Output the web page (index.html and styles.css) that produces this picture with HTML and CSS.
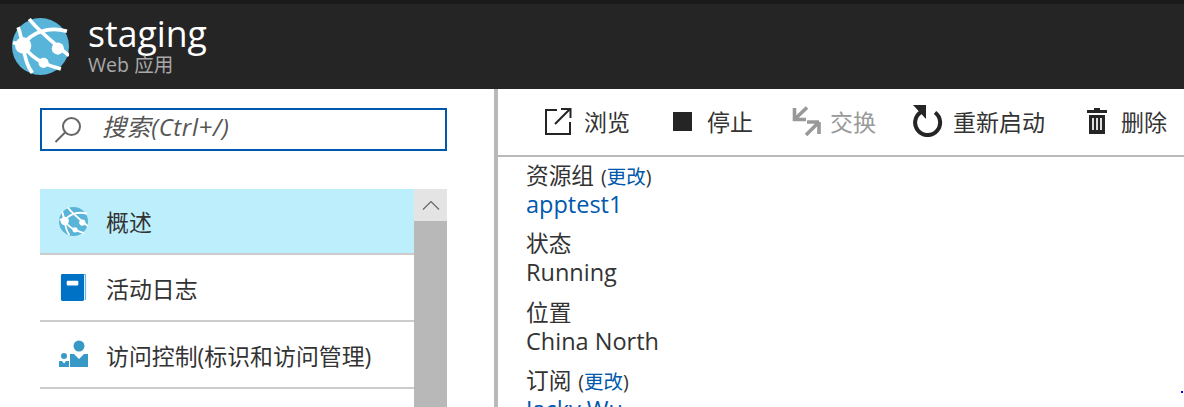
FILE: index.html
```html
<!DOCTYPE html>
<html lang="zh">
<head>
<meta charset="utf-8">
<title>staging</title>
<link rel="stylesheet" href="styles.css">
</head>
<body>
<svg class="defs" width="0" height="0">
  <symbol id="globe" viewBox="0 0 56 56">
    <circle cx="28" cy="28" r="28" fill="#59b4d9"/>
    <path d="M17 1C25 12 38 22 56 37M11 27C18 14 36 8 54 13M6 9C9 16 9 22 11 27C12 36 14 46 20 54M1 24 11 27M11 27C17 36 24 41 31 44C36 47 42 48 48 50" fill="none" stroke="#fff" stroke-width="3.600"/>
    <circle cx="11" cy="27" r="8" fill="#fff"/>
    <circle cx="45" cy="30" r="6" fill="#fff"/>
    <circle cx="31" cy="44" r="5" fill="#fff"/>
  </symbol>
</svg>
<header class="header">
  <svg class="logo" viewBox="0 0 56 56"><use href="#globe"/></svg>
  <div class="titles">
    <div class="title">staging</div>
    <div class="subtitle">Web 应用</div>
  </div>
</header>
<main class="main">
  <aside class="sidebar">
    <div class="search">
      <svg class="search-icon" viewBox="0 0 28 28"><circle cx="17.500" cy="10.500" r="8.500" fill="none" stroke="#666" stroke-width="2"/><path d="M11 16.500 1.500 26" stroke="#666" stroke-width="2" fill="none"/></svg>
      <span class="search-text">搜索(Ctrl+/)</span>
    </div>
    <div class="menu">
      <ul class="menu-list">
        <li class="menu-item active">
          <svg class="menu-icon" viewBox="0 0 56 56"><use href="#globe"/></svg>
          <span>概述</span>
        </li>
        <li class="menu-item">
          <svg class="menu-icon" viewBox="0 0 28 30"><path d="M3 1h23a1 1 0 0 1 1 1v26h-1V2H3z" fill="#59b4d9"/><rect x="1" y="1" width="24" height="28" rx="1.500" fill="#0072c6"/><rect x="7" y="8" width="12" height="5" rx="1" fill="#fff"/></svg>
          <span>活动日志</span>
        </li>
        <li class="menu-item">
          <svg class="menu-icon" viewBox="0 0 29 29"><circle cx="20" cy="6" r="5.500" fill="#3999c6"/><path d="M11 14h4l5 5 5-5h4v13H11z" fill="#3999c6"/><circle cx="5" cy="16" r="3" fill="#3999c6"/><path d="M0 21h3l2 2.500 2-2.500h3v6H0z" fill="#3999c6"/></svg>
          <span>访问控制(标识和访问管理)</span>
        </li>
      </ul>
      <div class="scrollbar">
        <div class="scroll-up">
          <svg class="scroll-arrow" viewBox="0 0 18 10"><path d="M1 9.500 9 1.500l8 8" fill="none" stroke="#666" stroke-width="1.200"/></svg>
        </div>
      </div>
    </div>
  </aside>
  <section class="content">
    <nav class="toolbar">
      <div class="tool tool-browse">
        <svg class="tool-icon" viewBox="0 0 28 28"><path d="M13 3H2v24h24V15M11 17 26 2M17 2h9.500v9" fill="none" stroke="#252525" stroke-width="2"/></svg>
        <span>浏览</span>
      </div>
      <div class="tool tool-stop">
        <svg class="tool-icon icon-stop" viewBox="0 0 20 20"><rect width="20" height="20" fill="#252525"/></svg>
        <span>停止</span>
      </div>
      <div class="tool tool-swap disabled">
        <svg class="tool-icon icon-swap" viewBox="0 0 29 32"><path d="M2.500 3v11.500H14M3 14 15 2.500M27 17H15M27 17v12M26.500 17.500 14 30" fill="none" stroke="#999" stroke-width="3.600"/></svg>
        <span>交换</span>
      </div>
      <div class="tool tool-restart">
        <svg class="tool-icon icon-restart" viewBox="0 0 30 32"><path d="M22 7.500A12.500 12.500 0 1 1 8 7" fill="none" stroke="#252525" stroke-width="4"/><path d="M0 0h13v14z" fill="#252525"/></svg>
        <span>重新启动</span>
      </div>
      <div class="tool tool-delete">
        <svg class="tool-icon icon-delete" viewBox="0 0 20 26"><path d="M7 0h6v2h7v3H0V2h7zM2 7h16v19H2z" fill="#252525"/><path d="M6 10v12M10 10v12M14 10v12" stroke="#fff" stroke-width="1.700"/></svg>
        <span>删除</span>
      </div>
    </nav>
    <dl class="props">
      <dt class="prop-label">资源组 <span class="paren">(<a class="link">更改</a>)</span></dt>
      <dd class="prop-value"><a class="link">apptest1</a></dd>
      <dt class="prop-label">状态</dt>
      <dd class="prop-value">Running</dd>
      <dt class="prop-label">位置</dt>
      <dd class="prop-value">China North</dd>
      <dt class="prop-label">订阅 <span class="paren">(<a class="link">更改</a>)</span></dt>
      <dd class="prop-value"><a class="link">Jacky Wu</a></dd>
    </dl>
    <div class="speck"></div>
  </section>
</main>
</body>
</html>
```
FILE: styles.css
```css
* { box-sizing: border-box; }
html, body { margin: 0; height: 100%; overflow: hidden; }
body {
  background: #fff;
  color: #333;
  font-family: "Open Sans", "Noto Sans CJK SC", sans-serif;
  display: flex;
  flex-direction: column;
  height: 407px;
}
.defs { position: absolute; }
.header {
  height: 89px;
  flex: none;
  background: #252525;
  border-top: 4px solid #1a1a1a;
  display: flex;
  align-items: flex-start;
  padding: 14px 0 0 12px;
}
.logo { width: 57px; height: 57px; flex: none; }
.titles { margin-left: 19px; }
.title { color: #fff; font-size: 35.600px; line-height: 30px; }
.subtitle { color: #a8a8a8; font-size: 19.600px; line-height: 24px; margin-top: 5px; }
.main { flex: 1; display: flex; min-height: 0; }
.sidebar {
  width: 498px;
  flex: none;
  border-right: 4px solid #b9b9b9;
  padding: 19px 47px 0 40px;
  overflow: hidden;
}
.search {
  height: 43px;
  border: 2px solid #0058ad;
  display: flex;
  align-items: center;
  padding-left: 12px;
}
.search-icon { width: 28px; height: 28px; flex: none; }
.search-text { margin: 0 0 5px 20px; font-size: 24px; line-height: 30px; font-style: italic; letter-spacing: 0.600px; color: #555; }
.menu { display: flex; margin-top: 38px; }
.menu-list { list-style: none; margin: 0; padding: 0; flex: 1; }
.menu-item {
  height: 67px;
  border-bottom: 2px solid #ccc;
  display: flex;
  align-items: center;
  font-size: 22.900px;
  color: #333;
  padding-left: 19px;
}
.menu-item.active { background: #bdeefb; height: 66px; }
.menu-icon { width: 29px; height: 29px; flex: none; margin-right: 18px; }
.scrollbar { width: 33px; flex: none; background: #b8b8b8; height: 218px; }
.scroll-up { height: 32px; background: #e4e4e4; display: flex; align-items: center; justify-content: center; }
.scroll-arrow { width: 18px; height: 10px; }
.content { flex: 1; position: relative; min-width: 0; overflow: hidden; }
.toolbar {
  height: 68px;
  border-bottom: 2px solid #b9b9b9;
  display: flex;
  align-items: center;
  padding: 0 0 0 46px;
  font-size: 23px;
  color: #333;
}
.tool { display: flex; align-items: center; flex: none; padding-bottom: 2px; }
.tool-icon { width: 28px; height: 28px; margin-right: 12px; flex: none; }
.tool-browse { width: 129px; }
.tool-stop { width: 119px; }
.tool-swap { width: 121px; }
.tool-restart { width: 174px; }
.icon-stop { width: 19px; height: 19px; margin: 0 15px 0 0; }
.icon-swap { width: 29px; height: 32px; margin-right: 9px; }
.icon-restart { width: 30px; height: 32px; margin-right: 10px; }
.icon-delete { width: 20px; height: 26px; margin-right: 14px; }
.disabled { color: #999; }
.props { margin: 0; padding: 0 0 0 28px; }
.prop-label { font-size: 22.700px; line-height: 38px; height: 34px; color: #333; }
.prop-value { margin: 0 0 8.300px; font-size: 23.500px; line-height: 26px; height: 26px; color: #333; }
.paren { font-size: 19.500px; margin-left: 1px; }
.link { color: #0058ad; }
.speck { position: absolute; right: 1px; top: 302px; width: 2px; height: 2px; background: #00f; }
```
